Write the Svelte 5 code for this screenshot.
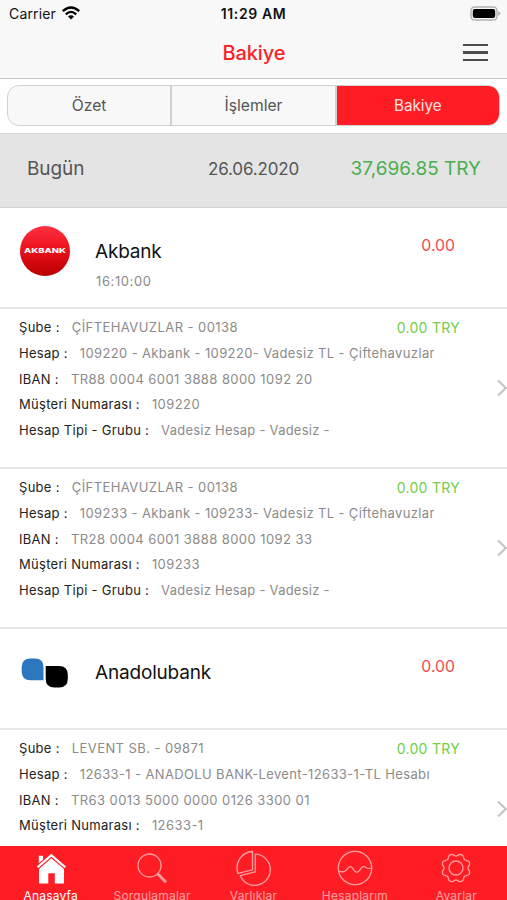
<script lang="ts">
	const segments = ['Özet', 'İşlemler', 'Bakiye'];
	let activeSegment = $state('Bakiye');

	const banks = [
		{
			name: 'Akbank',
			logo: 'akbank',
			time: '16:10:00',
			total: '0.00',
			accounts: [
				{
					balance: '0.00 TRY',
					rows: [
						{ label: 'Şube :', value: 'ÇİFTEHAVUZLAR - 00138' },
						{ label: 'Hesap :', value: '109220 - Akbank - 109220- Vadesiz TL - Çiftehavuzlar' },
						{ label: 'IBAN :', value: 'TR88 0004 6001 3888 8000 1092 20' },
						{ label: 'Müşteri Numarası :', value: '109220' },
						{ label: 'Hesap Tipi - Grubu :', value: 'Vadesiz Hesap - Vadesiz -' }
					]
				},
				{
					balance: '0.00 TRY',
					rows: [
						{ label: 'Şube :', value: 'ÇİFTEHAVUZLAR - 00138' },
						{ label: 'Hesap :', value: '109233 - Akbank - 109233- Vadesiz TL - Çiftehavuzlar' },
						{ label: 'IBAN :', value: 'TR28 0004 6001 3888 8000 1092 33' },
						{ label: 'Müşteri Numarası :', value: '109233' },
						{ label: 'Hesap Tipi - Grubu :', value: 'Vadesiz Hesap - Vadesiz -' }
					]
				}
			]
		},
		{
			name: 'Anadolubank',
			logo: 'anadolubank',
			time: '',
			total: '0.00',
			accounts: [
				{
					balance: '0.00 TRY',
					rows: [
						{ label: 'Şube :', value: 'LEVENT SB. - 09871' },
						{ label: 'Hesap :', value: '12633-1 - ANADOLU BANK-Levent-12633-1-TL Hesabı' },
						{ label: 'IBAN :', value: 'TR63 0013 5000 0000 0126 3300 01' },
						{ label: 'Müşteri Numarası :', value: '12633-1' }
					]
				}
			]
		}
	];

	const tabs = [
		{ icon: 'home', label: 'Anasayfa' },
		{ icon: 'search', label: 'Sorgulamalar' },
		{ icon: 'pie', label: 'Varlıklar' },
		{ icon: 'wave', label: 'Hesaplarım' },
		{ icon: 'gear', label: 'Ayarlar' }
	];
	let activeTab = $state('home');

	// outline of the gear: a circle with eight soft teeth
	const gearPoints = Array.from({ length: 96 }, (_, i) => {
		const angle = (i / 96) * Math.PI * 2;
		const wave = Math.cos(8 * angle);
		const radius = 13.4 - 1.3 * wave - 0.2 * wave * wave;
		return `${(18 + radius * Math.sin(angle)).toFixed(2)},${(18 - radius * Math.cos(angle)).toFixed(2)}`;
	}).join(' ');
</script>

<div class="app">
	<header>
		<div class="status">
			<div class="status__left">
				<span>Carrier</span>
				<svg width="18" height="14" viewBox="0 0 18 14">
					<path d="M.8 5.2Q9-2.3 17.2 5.2" fill="none" stroke="#000" stroke-width="2.5" />
					<path d="M3.8 8.3Q9 3.4 14.2 8.3" fill="none" stroke="#000" stroke-width="2.3" />
					<path d="M6 10.6Q9 7.9 12 10.6L9 13.6Z" />
				</svg>
			</div>
			<span class="status__time">11:29 AM</span>
			<svg class="battery" width="31" height="15" viewBox="0 0 31 15">
				<rect x="1" y="1" width="26" height="13" rx="3.8" fill="#f8f8f8" stroke="#b1b1b1" stroke-width="1.4" />
				<rect x="2.8" y="2.9" width="22.4" height="9.2" rx="2" />
				<path d="M28.3 5.2Q30.4 6 30.4 7.5T28.3 9.8Z" fill="#b1b1b1" />
			</svg>
		</div>
		<div class="navbar">
			<h1>Bakiye</h1>
			<button class="menu" aria-label="Menü">
				<i></i>
				<i></i>
				<i></i>
			</button>
		</div>
	</header>

	<div class="segments">
		{#each segments as segment}
			<button class:active={activeSegment === segment} onclick={() => (activeSegment = segment)}>
				{segment}
			</button>
		{/each}
	</div>

	<div class="day">
		<span class="day__name">Bugün</span>
		<span class="day__date">26.06.2020</span>
		<span class="day__total">37,696.85 TRY</span>
	</div>

	<main>
		{#each banks as bank}
			<section>
				<div class="bank">
					<div class="bank__logo">
						{#if bank.logo === 'akbank'}
							<div class="akbank">
								<svg width="44" height="8" viewBox="0 0 44 8">
									<text x="1" y="6.3" textLength="42" lengthAdjust="spacingAndGlyphs">AKBANK</text>
								</svg>
							</div>
						{:else}
							<svg width="48" height="30" viewBox="0 0 48 30">
								<path d="M9.500 .5H14Q22.500.5 22.500 9V22.200H9.500Q.7 22.200.7 13.400V9.300Q.7.5 9.500.5Z" fill="#2a77bd" />
								<path d="M24.700 8H38Q46.800 8 46.800 16.800V20.700Q46.800 29.500 38 29.500H33.500Q24.700 29.500 24.700 20.700Z" />
							</svg>
						{/if}
					</div>
					<div class="bank__info">
						<h2>{bank.name}</h2>
						<p>{bank.time}</p>
					</div>
					<span class="bank__total">{bank.total}</span>
				</div>

				{#each bank.accounts as account}
					<div class="account">
						<div class="account__rows">
							{#each account.rows as row, i}
								<div class="row">
									<span class="row__label">{row.label}</span>
									<span class="row__value">{row.value}</span>
									{#if i === 0}
										<span class="row__balance">{account.balance}</span>
									{/if}
								</div>
							{/each}
						</div>
						<svg class="chevron" width="10" height="18" viewBox="0 0 10 18">
							<path d="M1 1.5L8.7 9L1 16.5" fill="none" stroke="#c3c3c6" stroke-width="2" />
						</svg>
					</div>
				{/each}
			</section>
		{/each}
	</main>

	<nav>
		{#each tabs as tab}
			<button class="tab" class:active={activeTab === tab.icon} onclick={() => (activeTab = tab.icon)}>
				<svg width="36" height="36" viewBox="0 0 36 36" fill="none" stroke="currentColor" stroke-width="1.3">
					{#if tab.icon === 'home'}
						<path
							d="M3.8 16.5L18.3 3.8L33 16.5L31.5 18L18.3 6.8L5.3 18ZM5.8 5.8h4.3v3.6L5.8 13.2ZM18.3 8.3L31 19.1V33.5H21.800V23.2H15.3V33.5H6V19.1Z"
							fill="currentColor"
							stroke="none"
						/>
					{:else if tab.icon === 'search'}
						<circle cx="15.5" cy="15.5" r="11.5" />
						<path d="M23.6 23.8L32 32.3" stroke-width="2.8" />
					{:else if tab.icon === 'pie'}
						<path d="M16.5 1.5V19.8L1.9 23.5C-1.5 12.8 5.5 2 16.5 1.5Z" />
						<path d="M19.3 4.2V21.8L4.3 25.7A15.6 15.6 0 1 0 19.3 4.2Z" />
					{:else if tab.icon === 'wave'}
						<circle cx="18" cy="18" r="16.7" />
						<path
							d="M2 21.3C4.5 21.5 6.2 22.5 8.2 21C10.5 19.3 11 16.7 13.3 16.7C16.3 16.7 16.5 22.3 19.8 22.3C23 22.3 23.5 16.7 26.5 16.7C29 16.7 29.5 19.3 34 18.2"
						/>
					{:else}
						<circle cx="18" cy="18" r="7" />
						<polygon points={gearPoints} />
					{/if}
				</svg>
				<span>{tab.label}</span>
			</button>
		{/each}
	</nav>
</div>

<style>
	:global(body) {
		margin: 0;
		overflow: hidden;
	}

	.app {
		display: flex;
		flex-direction: column;
		width: 507px;
		height: 900px;
		overflow: hidden;
		background: #fff;
		font-family: Inter, 'Liberation Sans', sans-serif;
	}

	button {
		margin: 0;
		padding: 0;
		border: none;
		background: none;
		font-family: inherit;
	}

	header {
		flex: none;
		height: 78px;
		background: #f8f8f8;
		border-bottom: 1px solid #c6c6c6;
	}

	.status {
		display: grid;
		grid-template-columns: 1fr auto 1fr;
		align-items: center;
		height: 27px;
		padding: 0 6px 0 9px;
		font-size: 14px;
		color: #111;
	}
	.status__left {
		display: flex;
		align-items: center;
		gap: 6px;
		margin-top: -1px;
		letter-spacing: 0.15px;
	}
	.status__time {
		margin-left: -3px;
		font-weight: 600;
		letter-spacing: 0.6px;
	}
	.battery {
		justify-self: end;
		margin-top: -1px;
	}

	.navbar {
		display: grid;
		grid-template-columns: 1fr auto 1fr;
		align-items: center;
		height: 51px;
		padding-right: 19px;
	}
	h1 {
		grid-column: 2;
		margin: 0 0 0 20px;
		font-size: 20px;
		font-weight: 500;
		letter-spacing: -0.1px;
		color: #f82227;
	}
	.menu {
		display: flex;
		flex-direction: column;
		gap: 5px;
		justify-self: end;
		width: 25px;
	}
	.menu i {
		height: 2.4px;
		background: #4c4c4c;
	}

	.segments {
		display: flex;
		flex: none;
		box-sizing: border-box;
		height: 41px;
		margin: 6px 7px 7px;
		border: 1px solid #d0d0d0;
		border-radius: 12px;
		background: #f8f8f8;
		overflow: hidden;
	}
	.segments button {
		flex: 1;
		border-right: 2px solid #d0d0d0;
		font-size: 15.7px;
		color: #555;
	}
	.segments button:last-child {
		border-right: none;
	}
	.segments button.active {
		background: #ff1d25;
		font-size: 15.2px;
		color: #ffe3e3;
	}

	.day {
		display: flex;
		flex: none;
		align-items: center;
		box-sizing: border-box;
		height: 75px;
		padding: 0 26px 4px 27px;
		border-top: 1px solid #d8d8d8;
		border-bottom: 1px solid #d4d4d4;
		background: #e4e4e4;
		color: #555;
	}
	.day__name {
		width: 181px;
		font-size: 19px;
		letter-spacing: -0.1px;
	}
	.day__date {
		font-size: 17px;
		letter-spacing: -0.15px;
	}
	.day__total {
		margin-left: auto;
		font-size: 19px;
		color: #4bae50;
	}

	main {
		flex: 1;
		min-height: 0;
		overflow: hidden;
	}

	.bank {
		display: flex;
		box-sizing: border-box;
		height: 101px;
		padding: 0 52px 0 20px;
		border-bottom: 2px solid #e7e7e7;
	}
	.bank__logo {
		display: flex;
		align-items: center;
		width: 75px;
		height: 86px;
	}
	.bank__logo > svg {
		margin: 1px 0 0 1px;
	}
	.akbank {
		display: flex;
		align-items: center;
		justify-content: center;
		width: 50px;
		height: 50px;
		border-radius: 50%;
		background: linear-gradient(#ff3040, #e8101a 50%, #b80000);
	}
	.akbank text {
		font-size: 6.5px;
		font-weight: 800;
		fill: #fff;
	}
	.bank__info {
		padding-top: 31px;
	}
	h2 {
		margin: 0;
		font-size: 19px;
		line-height: 26px;
		font-weight: 400;
		letter-spacing: -0.18px;
		color: #111;
	}
	.bank__info p {
		margin: 7px 0 0 1px;
		font-size: 13px;
		line-height: 18px;
		letter-spacing: 0.6px;
		color: #8b8b8b;
	}
	.bank__total {
		margin-left: auto;
		padding-top: 28px;
		font-size: 15.8px;
		line-height: 20px;
		color: #f04a50;
	}

	.account {
		display: flex;
		align-items: center;
		justify-content: space-between;
		box-sizing: border-box;
		height: 160px;
		padding: 0 0 0 19px;
		border-bottom: 2px solid #e7e7e7;
	}
	.account__rows {
		align-self: flex-start;
		width: 441px;
		padding-top: 5.4px;
	}
	.row {
		display: flex;
		align-items: center;
		height: 25.7px;
		font-size: 13px;
		letter-spacing: 0.43px;
		white-space: nowrap;
	}
	.row__label {
		margin-right: 12px;
		letter-spacing: 0.29px;
		color: #222;
	}
	.row__value {
		color: #8b8b8b;
	}
	.row:nth-child(2) .row__value {
		letter-spacing: 0.37px;
	}
	.row:nth-child(5) .row__value {
		letter-spacing: 0.24px;
	}
	.row__balance {
		margin-left: auto;
		font-size: 14px;
		letter-spacing: 0.3px;
		color: #70ce47;
	}
	.chevron {
		flex: none;
	}

	nav {
		display: flex;
		flex: none;
		height: 54px;
		background: #ff1d25;
		overflow: hidden;
	}
	.tab {
		display: flex;
		flex: 1;
		flex-direction: column;
		align-items: center;
		padding-top: 4px;
		color: #ffa0a0;
	}
	.tab.active {
		color: #fff;
	}
	.tab svg {
		flex: none;
	}
	.tab span {
		margin-top: 2px;
		font-size: 12px;
		line-height: 16px;
		letter-spacing: 0.2px;
		white-space: nowrap;
	}
</style>
